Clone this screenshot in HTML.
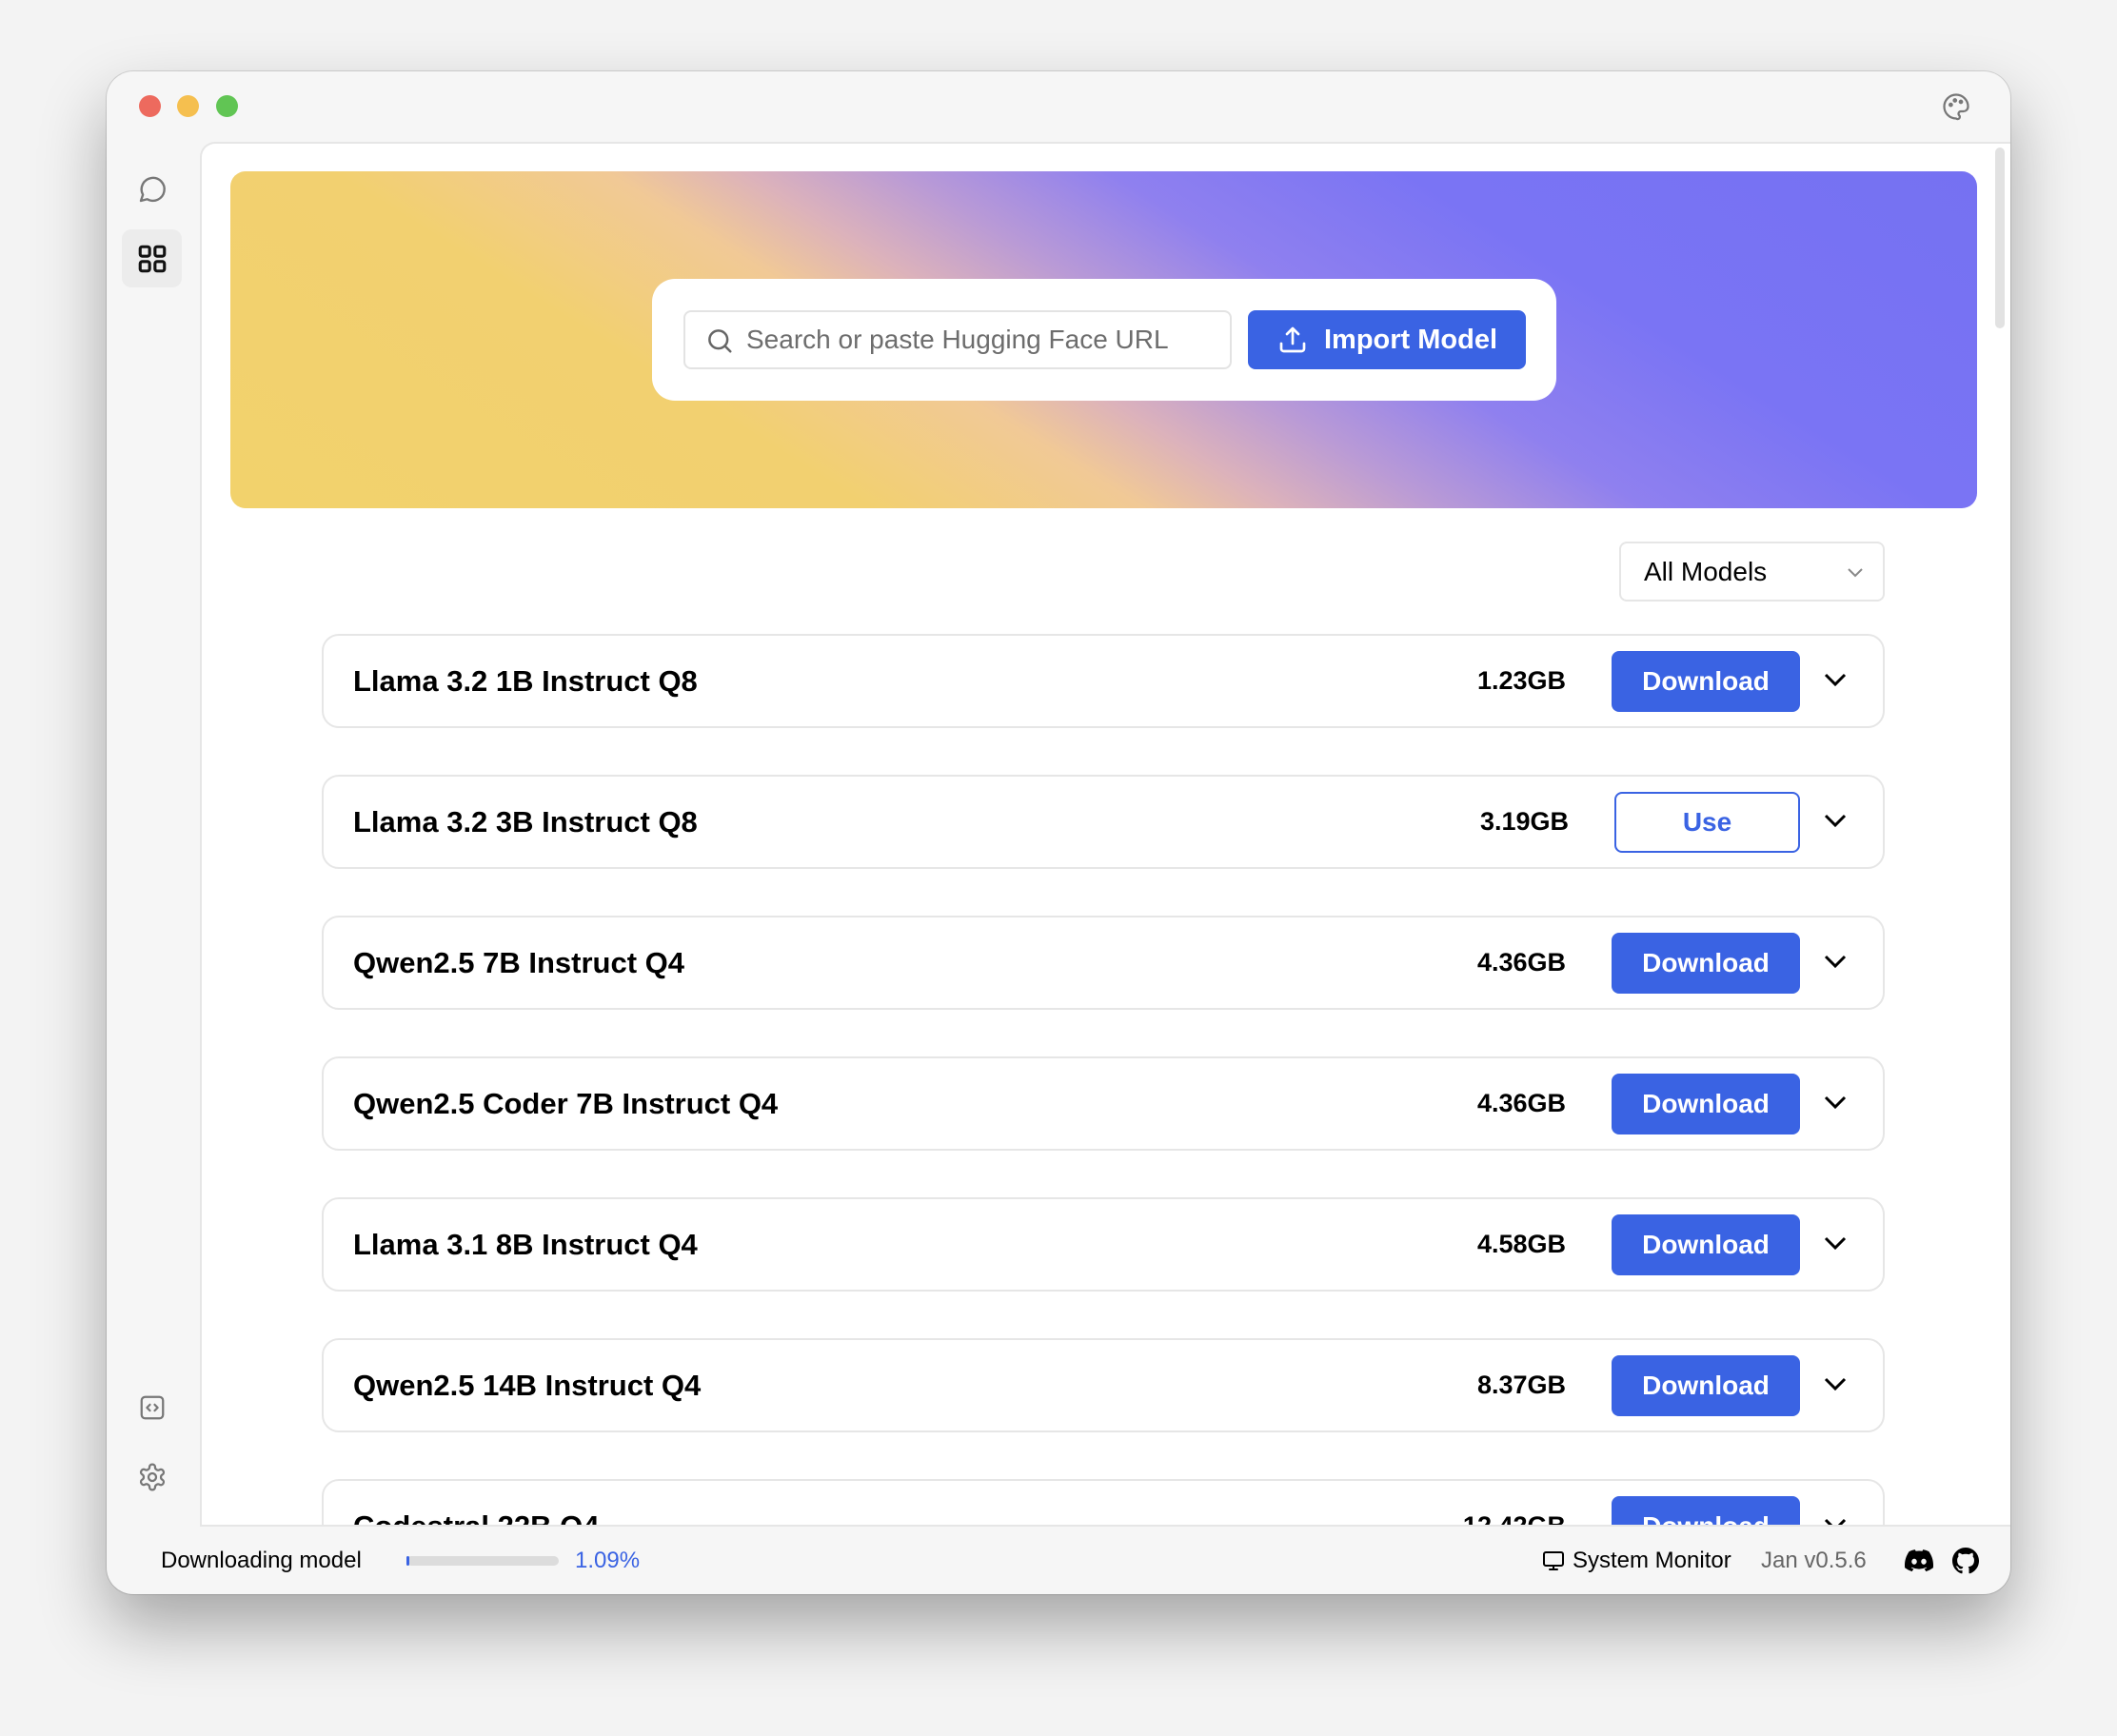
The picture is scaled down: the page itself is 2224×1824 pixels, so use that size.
<!DOCTYPE html>
<html><head><meta charset="utf-8"><style>
*{box-sizing:border-box;margin:0;padding:0}
body{width:2224px;height:1824px;background:#f3f3f3;font-family:"Liberation Sans",sans-serif;position:relative;overflow:hidden;color:#000}
.win{position:absolute;left:112px;top:75px;width:2000px;height:1600px;background:#f6f6f6;border-radius:28px;box-shadow:0 34px 70px rgba(0,0,0,.32),0 0 0 1px rgba(0,0,0,.12);overflow:hidden}
.tl{position:absolute;top:25px;width:23px;height:23px;border-radius:50%}
.panel{position:absolute;left:98px;top:74px;width:1902px;height:1455px;background:#fff;border-top-left-radius:16px;border:2px solid #e6e6e6;border-right:none;overflow:hidden}
.banner{position:absolute;left:30px;top:29px;width:1835px;height:354px;border-radius:16px;background:linear-gradient(32deg,#f2d26c 0%,#f2d070 28%,#f1c996 40%,#dcb2bb 46%,#b99ad6 53%,#8f80ef 62%,#7a74f4 75%,#7571f2 100%)}
.card{position:absolute;left:443px;top:113px;width:950px;height:128px;background:#fff;border-radius:24px}
.inp{position:absolute;left:33px;top:33px;width:576px;height:62px;border:2px solid #e3e3e3;border-radius:8px;font-size:28px;color:#6d6d6d;line-height:58px;padding-left:64px}
.imp{position:absolute;left:626px;top:33px;width:292px;height:62px;background:#3a63e3;border-radius:8px;color:#fff;font-size:29px;font-weight:bold;line-height:62px;padding-left:80px}
.dd{position:absolute;left:1489px;top:418px;width:279px;height:63px;border:2px solid #e6e6e6;border-radius:8px;font-size:28px;line-height:59px;padding-left:24px}
.row{position:absolute;left:126px;width:1642px;height:99px;border:2px solid #e6e6e6;border-radius:18px}
.row .t{position:absolute;left:31px;top:0;line-height:95px;font-size:31px;font-weight:bold}
.row .s{position:absolute;right:333px;top:0;line-height:95px;font-size:27px;font-weight:bold}
.row .b{position:absolute;left:1353px;top:16px;width:198px;height:64px;background:#3a63e3;border-radius:8px;color:#fff;font-size:28px;font-weight:bold;text-align:center;line-height:64px}
.row .b.u{background:#fff;border:2px solid #3a63e3;color:#3a63e3;left:1356px;width:195px;line-height:60px}
.row svg.c{position:absolute;left:1575px;top:36px}
.foot{position:absolute;top:1551px;font-size:24px;line-height:28px}
</style></head><body>
<div class="win">
<div class="tl" style="left:34px;background:#ed6a5e"></div>
<div class="tl" style="left:74px;background:#f5bf4f"></div>
<div class="tl" style="left:115px;background:#61c554"></div>
<svg style="position:absolute;left:1928px;top:22px" width="30" height="30" viewBox="0 0 24 24" fill="none" stroke="#777" stroke-width="1.8" stroke-linecap="round" stroke-linejoin="round"><path d="M12 22a10 10 0 1 1 10-10c0 2.8-2.2 4-4 4h-2a2 2 0 0 0-1.5 3.3A1.6 1.6 0 0 1 12 22z"/><circle cx="7.5" cy="10.5" r="1"/><circle cx="11" cy="6.8" r="1"/><circle cx="16" cy="8" r="1"/></svg>
<svg style="position:absolute;left:32px;top:108px" width="32" height="32" viewBox="0 0 24 24" fill="none" stroke="#777" stroke-width="1.8" stroke-linejoin="round"><path d="M3 21l1.6-4.8A9 9 0 1 1 8 19.7z"/></svg>
<div style="position:absolute;left:16px;top:166px;width:63px;height:61px;background:#ececec;border-radius:10px"></div>
<svg style="position:absolute;left:31px;top:180px" width="34" height="34" viewBox="0 0 24 24" fill="none" stroke="#111" stroke-width="2.2"><rect x="3" y="3" width="7" height="7" rx="1.5"/><rect x="14" y="3" width="7" height="7" rx="1.5"/><rect x="3" y="14" width="7" height="7" rx="1.5"/><rect x="14" y="14" width="7" height="7" rx="1.5"/></svg>
<svg style="position:absolute;left:33px;top:1389px" width="30" height="30" viewBox="0 0 24 24" fill="none" stroke="#777" stroke-width="1.8" stroke-linecap="round" stroke-linejoin="round"><rect x="3" y="3" width="18" height="18" rx="3"/><path d="M10 9.5L7.5 12l2.5 2.5M14 9.5l2.5 2.5-2.5 2.5"/></svg>
<svg style="position:absolute;left:32px;top:1461px" width="32" height="32" viewBox="0 0 24 24" fill="none" stroke="#777" stroke-width="1.7" stroke-linecap="round" stroke-linejoin="round"><path d="M12.2 2h-.4a2 2 0 0 0-2 2v.2a2 2 0 0 1-1 1.7l-.4.3a2 2 0 0 1-2 0l-.2-.1a2 2 0 0 0-2.7.7l-.2.4a2 2 0 0 0 .7 2.7l.2.1a2 2 0 0 1 1 1.7v.5a2 2 0 0 1-1 1.7l-.2.1a2 2 0 0 0-.7 2.7l.2.4a2 2 0 0 0 2.7.7l.2-.1a2 2 0 0 1 2 0l.4.3a2 2 0 0 1 1 1.7V20a2 2 0 0 0 2 2h.4a2 2 0 0 0 2-2v-.2a2 2 0 0 1 1-1.7l.4-.3a2 2 0 0 1 2 0l.2.1a2 2 0 0 0 2.7-.7l.2-.4a2 2 0 0 0-.7-2.7l-.2-.1a2 2 0 0 1-1-1.7v-.5a2 2 0 0 1 1-1.7l.2-.1a2 2 0 0 0 .7-2.7l-.2-.4a2 2 0 0 0-2.7-.7l-.2.1a2 2 0 0 1-2 0l-.4-.3a2 2 0 0 1-1-1.7V4a2 2 0 0 0-2-2z"/><circle cx="12" cy="12" r="3"/></svg>
<div class="panel">
<div style="position:absolute;right:6px;top:4px;width:10px;height:190px;background:#e2e2e2;border-radius:5px"></div>
<div class="banner">
<div class="card">
<div class="inp">Search or paste Hugging Face URL</div>
<svg style="position:absolute;left:56px;top:50px" width="30" height="30" viewBox="0 0 24 24" fill="none" stroke="#666" stroke-width="2" stroke-linecap="round"><circle cx="11" cy="11" r="7.5"/><path d="M16.5 16.5L21 21"/></svg>
<div class="imp">Import Model</div>
<svg style="position:absolute;left:657px;top:48px" width="32" height="32" viewBox="0 0 24 24" fill="none" stroke="#fff" stroke-width="2" stroke-linecap="round" stroke-linejoin="round"><path d="M12 15V3M7.5 7.5L12 3l4.5 4.5M3 15v4a2 2 0 0 0 2 2h14a2 2 0 0 0 2-2v-4"/></svg>
</div>
</div>
<div class="dd">All Models</div>
<svg style="position:absolute;left:1727px;top:443px" width="20" height="14" viewBox="0 0 20 14" fill="none" stroke="#888" stroke-width="2"><path d="M3 4l7 7 7-7"/></svg>
<div class="row" style="top:515px"><div class="t">Llama 3.2 1B Instruct Q8</div><div class="s">1.23GB</div><div class="b">Download</div><svg class="c" width="26" height="20" viewBox="0 0 26 20" fill="none" stroke="#000" stroke-width="3"><path d="M3 5l10 10 10-10"/></svg></div>
<div class="row" style="top:663px"><div class="t">Llama 3.2 3B Instruct Q8</div><div class="s" style="right:330px">3.19GB</div><div class="b u">Use</div><svg class="c" width="26" height="20" viewBox="0 0 26 20" fill="none" stroke="#000" stroke-width="3"><path d="M3 5l10 10 10-10"/></svg></div>
<div class="row" style="top:811px"><div class="t">Qwen2.5 7B Instruct Q4</div><div class="s">4.36GB</div><div class="b">Download</div><svg class="c" width="26" height="20" viewBox="0 0 26 20" fill="none" stroke="#000" stroke-width="3"><path d="M3 5l10 10 10-10"/></svg></div>
<div class="row" style="top:959px"><div class="t">Qwen2.5 Coder 7B Instruct Q4</div><div class="s">4.36GB</div><div class="b">Download</div><svg class="c" width="26" height="20" viewBox="0 0 26 20" fill="none" stroke="#000" stroke-width="3"><path d="M3 5l10 10 10-10"/></svg></div>
<div class="row" style="top:1107px"><div class="t">Llama 3.1 8B Instruct Q4</div><div class="s">4.58GB</div><div class="b">Download</div><svg class="c" width="26" height="20" viewBox="0 0 26 20" fill="none" stroke="#000" stroke-width="3"><path d="M3 5l10 10 10-10"/></svg></div>
<div class="row" style="top:1255px"><div class="t">Qwen2.5 14B Instruct Q4</div><div class="s">8.37GB</div><div class="b">Download</div><svg class="c" width="26" height="20" viewBox="0 0 26 20" fill="none" stroke="#000" stroke-width="3"><path d="M3 5l10 10 10-10"/></svg></div>
<div class="row" style="top:1403px"><div class="t">Codestral 22B Q4</div><div class="s">12.42GB</div><div class="b">Download</div><svg class="c" width="26" height="20" viewBox="0 0 26 20" fill="none" stroke="#000" stroke-width="3"><path d="M3 5l10 10 10-10"/></svg></div>
</div>
<div class="foot" style="left:57px">Downloading model</div>
<div style="position:absolute;left:315px;top:1560px;width:160px;height:10px;background:#dcdcdc;border-radius:5px"><div style="width:3px;height:10px;background:#3a63e3;border-radius:5px"></div></div>
<div class="foot" style="left:492px;color:#3a63e3">1.09%</div>
<svg style="position:absolute;left:1508px;top:1553px" width="24" height="24" viewBox="0 0 24 24" fill="none" stroke="#000" stroke-width="2" stroke-linecap="round"><rect x="2" y="3" width="20" height="14" rx="2"/><path d="M8 21h8M12 17v4"/></svg>
<div class="foot" style="left:1540px">System Monitor</div>
<div class="foot" style="left:1738px;color:#666">Jan v0.5.6</div>
<svg style="position:absolute;left:1889px;top:1553px" width="30" height="24" viewBox="0 0 24 19" fill="#000"><path d="M20.3 1.6A19.8 19.8 0 0 0 15.4 0l-.6 1.3a18.4 18.4 0 0 0-5.5 0L8.6 0a19.7 19.7 0 0 0-4.9 1.6C.5 6.3-.3 10.8.1 15.3a19.9 19.9 0 0 0 6 3.1l1.3-2.1a13 13 0 0 1-2-1l.5-.4a14.2 14.2 0 0 0 12.2 0l.5.4-2 1 1.3 2.1a19.8 19.8 0 0 0 6-3.1c.5-5.2-.8-9.7-3.6-13.7zM8 12.5c-1.2 0-2.2-1.1-2.2-2.4S6.8 7.7 8 7.7s2.2 1.1 2.2 2.4-1 2.4-2.2 2.4zm8 0c-1.2 0-2.2-1.1-2.2-2.4s1-2.4 2.2-2.4 2.2 1.1 2.2 2.4-1 2.4-2.2 2.4z"/></svg>
<svg style="position:absolute;left:1939px;top:1551px" width="28" height="28" viewBox="0 0 16 16" fill="#000"><path d="M8 0C3.58 0 0 3.58 0 8c0 3.54 2.29 6.53 5.47 7.59.4.07.55-.17.55-.38 0-.19-.01-.82-.01-1.49-2.01.37-2.53-.49-2.69-.94-.09-.23-.48-.94-.82-1.13-.28-.15-.68-.52-.01-.53.63-.01 1.08.58 1.23.82.72 1.21 1.87.87 2.33.66.07-.52.28-.87.51-1.07-1.78-.2-3.64-.89-3.64-3.95 0-.87.31-1.59.82-2.15-.08-.2-.36-1.02.08-2.12 0 0 .67-.21 2.2.82.64-.18 1.32-.27 2-.27.68 0 1.36.09 2 .27 1.53-1.04 2.2-.82 2.2-.82.44 1.1.16 1.92.08 2.12.51.56.82 1.27.82 2.15 0 3.07-1.87 3.75-3.65 3.95.29.25.54.73.54 1.48 0 1.07-.01 1.93-.01 2.2 0 .21.15.46.55.38A8.013 8.013 0 0016 8c0-4.42-3.58-8-8-8z"/></svg>
</div>
</body></html>
